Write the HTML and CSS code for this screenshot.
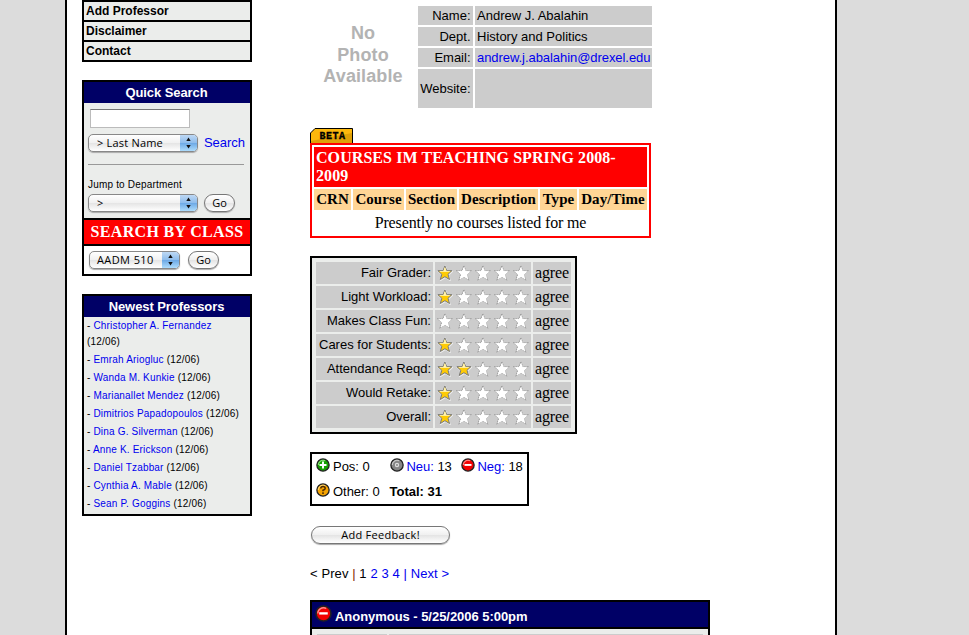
FILE: index.html
```html
<!DOCTYPE html>
<html lang="en">
<head>
<meta charset="utf-8">
<title>Andrew J. Abalahin</title>
<link rel="stylesheet" href="styles.css">
</head>
<body>
<svg class="defs" aria-hidden="true">
  <defs>
    <linearGradient id="blue" x1="0" y1="0" x2="0" y2="1"><stop offset="0" stop-color="#c4dcf5"/><stop offset=".48" stop-color="#8fbdec"/><stop offset=".52" stop-color="#6eaae6"/><stop offset="1" stop-color="#b5e2ff"/></linearGradient>
    <g id="star"><path d="M7.500 .8 9.400 5.500H14.500l-3.900 3.600 1.500 5.200-4.600-2.800-4.600 2.800 1.500-5.200L.5 5.500h5.100z"/></g>
    <symbol id="on" viewBox="0 0 16 16"><use href="#star" transform="translate(.9 1)" fill="#eee" stroke="#eee" stroke-width="1.200"/><use href="#star" transform="translate(.4 .2)" fill="#ffcb05" stroke="#77787a" stroke-width="1"/><path d="M7.900 2.700 8.900 6H6.900zM2.800 6.500h10" fill="#fff" stroke="#fff2a8" stroke-width=".9"/></symbol>
    <symbol id="off" viewBox="0 0 16 16"><use href="#star" transform="translate(.3 .2)" fill="#fff" stroke="#999" stroke-width="1.100" stroke-dasharray="1.500 .7"/><use href="#star" transform="translate(.9 1) scale(.95)" fill="#fff"/></symbol>
    <symbol id="neg" viewBox="0 0 16 16"><circle cx="8" cy="8" r="7" fill="#f20000" stroke="#222" stroke-width="1.500"/><path d="M2.600 8a5.400 5.400 0 0 1 8-4.700" fill="none" stroke="#ff8c8c" stroke-width="1.200"/><path d="M4 7.900h8" stroke="#fff" stroke-width="2.200"/></symbol>
    <symbol id="pos" viewBox="0 0 16 16"><circle cx="8" cy="8" r="7" fill="#16a000" stroke="#222" stroke-width="1.500"/><path d="M2.600 8a5.400 5.400 0 0 1 8-4.700" fill="none" stroke="#8de07b" stroke-width="1.200"/><path d="M4 8h8M8 4v8" stroke="#fff" stroke-width="2.200"/></symbol>
    <symbol id="neu" viewBox="0 0 16 16"><circle cx="8" cy="8" r="7" fill="#858585" stroke="#222" stroke-width="1.500"/><path d="M2.600 8a5.400 5.400 0 0 1 8-4.700" fill="none" stroke="#ccc" stroke-width="1.200"/><circle cx="8" cy="8" r="1.800" fill="none" stroke="#ddd" stroke-width="1.400"/></symbol>
    <symbol id="oth" viewBox="0 0 16 16"><circle cx="8" cy="8" r="7" fill="#f5a300" stroke="#222" stroke-width="1.500"/><path d="M2.600 8a5.400 5.400 0 0 1 8-4.700" fill="none" stroke="#ffd773" stroke-width="1.200"/><path d="M5.500 6.200Q5.500 4 8 4t2.500 2.200Q10.500 7.500 8 8.300v1.200M8 10.700v1.800" fill="none" stroke="#4a2800" stroke-width="1.700"/></symbol>
    <symbol id="arrows" viewBox="0 0 17 18"><path d="M0 0h17v18H0z" fill="url(#blue)"/><path d="M8.500 3.500 10.700 7H6.300zM6.300 11h4.400l-2.200 3.500z" fill="#111"/></symbol>
    <symbol id="beta" viewBox="0 0 43 15"><path d="M.5 15V5L5 .5h37.500V15" fill="#fcb80c"/><path d="M1 15v-2l41-8v10" fill="#dfa006"/><path d="M.5 15V5L5 .5h37.500V15" fill="none" stroke="#000"/></symbol>
  </defs>
</svg>
<div class="page">
  <aside class="side">
    <nav class="menu"><a>Add Professor</a><a>Disclaimer</a><a>Contact</a></nav>
    <section class="box quick">
      <h2>Quick Search</h2>
      <div class="quick-body">
        <input class="field" type="text" aria-label="Search">
        <div class="row"><span class="select wide"><b class="lastname">&gt; Last Name</b><svg><use href="#arrows"/></svg></span><a class="search">Search</a></div>
        <hr>
        <div class="jump">Jump to Department</div>
        <div class="row"><span class="select wide"><b>&gt;</b><svg><use href="#arrows"/></svg></span><span class="button go">Go</span></div>
      </div>
      <h3>SEARCH BY CLASS</h3>
      <div class="class-row"><span class="select narrow"><b class="aadm">AADM 510</b><svg><use href="#arrows"/></svg></span><span class="button go">Go</span></div>
    </section>
    <section class="box newest">
      <h2>Newest Professors</h2>
      <ul>
        <li>- <a>Christopher A. Fernandez</a><br>(12/06)</li>
        <li>- <a>Emrah Ariogluc</a> (12/06)</li>
        <li>- <a>Wanda M. Kunkie</a> (12/06)</li>
        <li>- <a>Marianallet Mendez</a> (12/06)</li>
        <li>- <a>Dimitrios Papadopoulos</a> (12/06)</li>
        <li>- <a>Dina G. Silverman</a> (12/06)</li>
        <li>- <a>Anne K. Erickson</a> (12/06)</li>
        <li>- <a>Daniel Tzabbar</a> (12/06)</li>
        <li>- <a>Cynthia A. Mable</a> (12/06)</li>
        <li>- <a>Sean P. Goggins</a> (12/06)</li>
      </ul>
    </section>
  </aside>
  <main>
    <div class="profile">
      <div class="photo">No<br>Photo<br>Available</div>
      <div class="info">
        <span>Name:</span><span class="v">Andrew J. Abalahin</span>
        <span>Dept.</span><span class="v">History and Politics</span>
        <span>Email:</span><span class="v"><a class="email">andrew.j.abalahin@drexel.edu</a></span>
        <span class="web">Website:</span><span class="v"></span>
      </div>
    </div>
    <div class="beta"><svg><use href="#beta"/></svg><span>BETA</span></div>
    <section class="courses">
      <h3>COURSES IM TEACHING SPRING 2008-<br>2009</h3>
      <div class="heads"><b>CRN</b><b>Course</b><b>Section</b><b>Description</b><b>Type</b><b>Day/Time</b></div>
      <p>Presently no courses listed for me</p>
    </section>
    <section class="ratings">
      <span class="l">Fair Grader:</span><span class="s"><svg><use href="#on"/></svg><svg><use href="#off"/></svg><svg><use href="#off"/></svg><svg><use href="#off"/></svg><svg><use href="#off"/></svg></span><span class="g">agree</span>
      <span class="l">Light Workload:</span><span class="s"><svg><use href="#on"/></svg><svg><use href="#off"/></svg><svg><use href="#off"/></svg><svg><use href="#off"/></svg><svg><use href="#off"/></svg></span><span class="g">agree</span>
      <span class="l">Makes Class Fun:</span><span class="s"><svg><use href="#off"/></svg><svg><use href="#off"/></svg><svg><use href="#off"/></svg><svg><use href="#off"/></svg><svg><use href="#off"/></svg></span><span class="g">agree</span>
      <span class="l">Cares for Students:</span><span class="s"><svg><use href="#on"/></svg><svg><use href="#off"/></svg><svg><use href="#off"/></svg><svg><use href="#off"/></svg><svg><use href="#off"/></svg></span><span class="g">agree</span>
      <span class="l">Attendance Reqd:</span><span class="s"><svg><use href="#on"/></svg><svg><use href="#on"/></svg><svg><use href="#off"/></svg><svg><use href="#off"/></svg><svg><use href="#off"/></svg></span><span class="g">agree</span>
      <span class="l">Would Retake:</span><span class="s"><svg><use href="#on"/></svg><svg><use href="#off"/></svg><svg><use href="#off"/></svg><svg><use href="#off"/></svg><svg><use href="#off"/></svg></span><span class="g">agree</span>
      <span class="l">Overall:</span><span class="s"><svg><use href="#on"/></svg><svg><use href="#off"/></svg><svg><use href="#off"/></svg><svg><use href="#off"/></svg><svg><use href="#off"/></svg></span><span class="g">agree</span>
    </section>
    <section class="counts">
      <span><svg><use href="#pos"/></svg>Pos: 0</span><span><svg><use href="#neu"/></svg><a>Neu:</a>&nbsp;13</span><span><svg><use href="#neg"/></svg><a>Neg:</a>&nbsp;18</span>
      <span><svg><use href="#oth"/></svg>Other: 0</span><b>Total: 31</b>
    </section>
    <span class="button feedback">Add Feedback!</span>
    <div class="pager">&lt; Prev <i>|</i> 1 <a>2</a> <a>3</a> <a>4</a> <a>|</a> <a>Next &gt;</a></div>
    <article class="post">
      <header><svg><use href="#neg"/></svg><b>Anonymous - 5/25/2006 5:00pm</b></header>
      <div class="post-body"><span></span><span></span></div>
    </article>
  </main>
</div>
</body>
</html>
```
FILE: styles.css
```css
* { box-sizing: border-box; }
body { margin: 0; background: #dcdcdc; font: 13px/16px "Liberation Sans", Arial, sans-serif; color: #000; }
html, body { height: 635px; overflow: hidden; }
h2, h3, p, ul { margin: 0; padding: 0; }
a { color: #00e; }
svg { display: block; flex: none; }
.defs { width: 0; height: 0; position: absolute; }
.page { width: 772px; height: 635px; margin-left: 65px; padding-left: 15px; background: #fff; border: solid #000; border-width: 0 2px; display: flex; overflow: hidden; }
.side { width: 170px; flex: none; }
main { margin-left: 58px; width: 402px; flex: none; }

.menu { border: 2px solid #000; height: 62px; background: #000; display: grid; grid-template-rows: repeat(3, 18px); gap: 2px; margin-bottom: 18px; }
.menu a { background: #ebedeb; color: #000; font-weight: bold; font-size: 12px; line-height: 18px; padding-left: 2px; white-space: nowrap; }
.box { border: 2px solid #000; background: #ebedeb; }
.box h2 { height: 21px; background: #006; color: #fff; font-size: 13px; line-height: 21px; text-align: center; letter-spacing: -.08px; padding-right: 1px; }
.quick { height: 196px; margin-bottom: 18px; }
.quick-body { height: 115px; padding: 6px 4px 0; }
.field { display: block; width: 100px; height: 19px; margin: 0 0 5px 2px; background: #fff; border: 1px solid #bbb; border-top-color: #777; padding: 0; }
.row { display: flex; height: 19px; align-items: center; }
.select { display: flex; height: 18px; border: 1px solid #888; border-radius: 5px; overflow: hidden; justify-content: space-between; background: linear-gradient(#fff, #f1f1f1 48%, #e5e5e5 52%, #fff); box-shadow: 0 1px 1px #aaa; flex: none; }
.select svg { width: 17px; height: 18px; margin-top: -1px; }
.select b, .button { font: 500 11px/16px "Open Sans", sans-serif; }
.select b { padding-left: 8px; }
.select .lastname { letter-spacing: .2px; }
.select .aadm { padding-left: 7px; letter-spacing: .4px; }
.wide { width: 110px; }
.narrow { width: 91px; }
.search { margin-left: 6px; letter-spacing: -.05px; }
.button { display: block; border: 1px solid #777; border-radius: 9px; height: 18px; text-align: center; background: linear-gradient(#fff, #f0f0f0 48%, #e4e4e4 52%, #fff); box-shadow: 0 1px 1px #aaa; }
.button.go { width: 31px; margin-left: 6px; line-height: 16px; }
hr { margin: 12px 2px 12px 0; border: 0; border-top: 1px solid #999; height: 1px; }
.jump { font-size: 10px; line-height: 16px; letter-spacing: .18px; }
.quick h3 { height: 28px; border: solid #000; border-width: 2px 0; background: #f00; color: #fff; font: bold 16px/24px "Liberation Serif", serif; text-align: center; white-space: nowrap; letter-spacing: .33px; }
.class-row { height: 28px; background: #fff; padding-left: 5px; display: flex; align-items: center; }
.class-row .go { margin-left: 8px; }
.newest { height: 222px; }
.newest ul { list-style: none; padding: 1px 0 0 3px; font-size: 10px; letter-spacing: .18px; }
.newest li { line-height: 16px; margin-bottom: 2px; white-space: nowrap; }

.profile { display: flex; height: 128px; padding-top: 6px; }
.photo { width: 106px; margin-right: 2px; padding: 17px 0 0; text-align: center; color: #b3b3b3; font-weight: bold; font-size: 18px; line-height: 21.500px; letter-spacing: .1px; }
.info { display: grid; grid-template: repeat(3, 19px) 39px / 55px 177px; gap: 2px; height: 102px; }
.info span { background: #ccc; text-align: right; padding-right: 2.500px; line-height: 19px; white-space: nowrap; }
.info .v { text-align: left; padding: 0 0 0 2px; }
.info .email { letter-spacing: -.06px; }
.info .web { line-height: 39px; }
.beta { width: 43px; height: 15px; display: grid; }
.beta svg, .beta span { grid-area: 1 / 1; width: 43px; height: 15px; }
.beta span { font: bold 10px/17px "Liberation Mono", monospace; text-align: center; z-index: 1; letter-spacing: .5px; padding: 0 0 0 2px; -webkit-text-stroke: .3px #000; }
.courses { width: 341px; height: 95px; border: 2px solid #f00; padding: 2px; font-family: "Liberation Serif", serif; font-size: 16px; }
.courses h3 { height: 40px; background: #f00; color: #fff; font-size: 16px; line-height: 18px; padding: 2px; white-space: nowrap; letter-spacing: .07px; }
.heads { display: grid; grid-template-columns: 37px 51px 51px 79px 37px 68px; gap: 2px; margin-top: 2px; text-align: center; line-height: 21px; }
.heads b { background: #ffd595; height: 21px; white-space: nowrap; font-size: 15px; letter-spacing: .07px; }
.courses p { text-align: center; line-height: 18px; margin-top: 4px; letter-spacing: -.14px; }
.ratings { width: 267px; height: 178px; margin-top: 18px; border: 2px solid #000; background: #ebedeb; padding: 4px; display: grid; grid-template-columns: 117px 96px 38px; grid-auto-rows: 22px; gap: 2px; }
.ratings span { background: #ccc; line-height: 21px; white-space: nowrap; }
.ratings .l { text-align: right; padding-right: 2px; }
.s { display: flex; padding: 3px 0 0 2px; gap: 3px; }
.s svg { width: 16px; height: 16px; }
.ratings .g { font: 16px/22px "Liberation Serif", serif; padding-left: 2px; letter-spacing: -.15px; }
.counts { width: 219px; height: 54px; margin-top: 18px; border: 2px solid #000; padding: 0 0 0 4px; display: grid; grid-template-columns: 73.500px 71px 64px; grid-template-rows: 25px 25px; white-space: nowrap; line-height: 25px; }
.counts span { display: flex; letter-spacing: -.04px; }
.counts svg { width: 14px; height: 14px; margin: 4px 3px 0 0; }
.feedback { width: 139px; height: 18px; margin: 20px 0 0 1px; letter-spacing: .3px; }
.pager { margin-top: 22px; height: 34px; line-height: 16px; letter-spacing: .09px; }
.pager i { font-style: normal; color: #832000; }
.post { width: 400px; border: 2px solid #000; background: #ebedeb; }
.post header { height: 27px; background: #006; color: #fff; border-bottom: 2px solid #000; display: flex; padding: 3px 0 0 3px; }
.post header svg { width: 17px; height: 17px; }
.post header b { margin-left: 3px; line-height: 24px; letter-spacing: -.04px; }
.post-body { display: grid; grid-template-columns: 70px 314px; gap: 2px; padding: 5px; height: 40px; }
.post-body span { background: #ccc; }
```
